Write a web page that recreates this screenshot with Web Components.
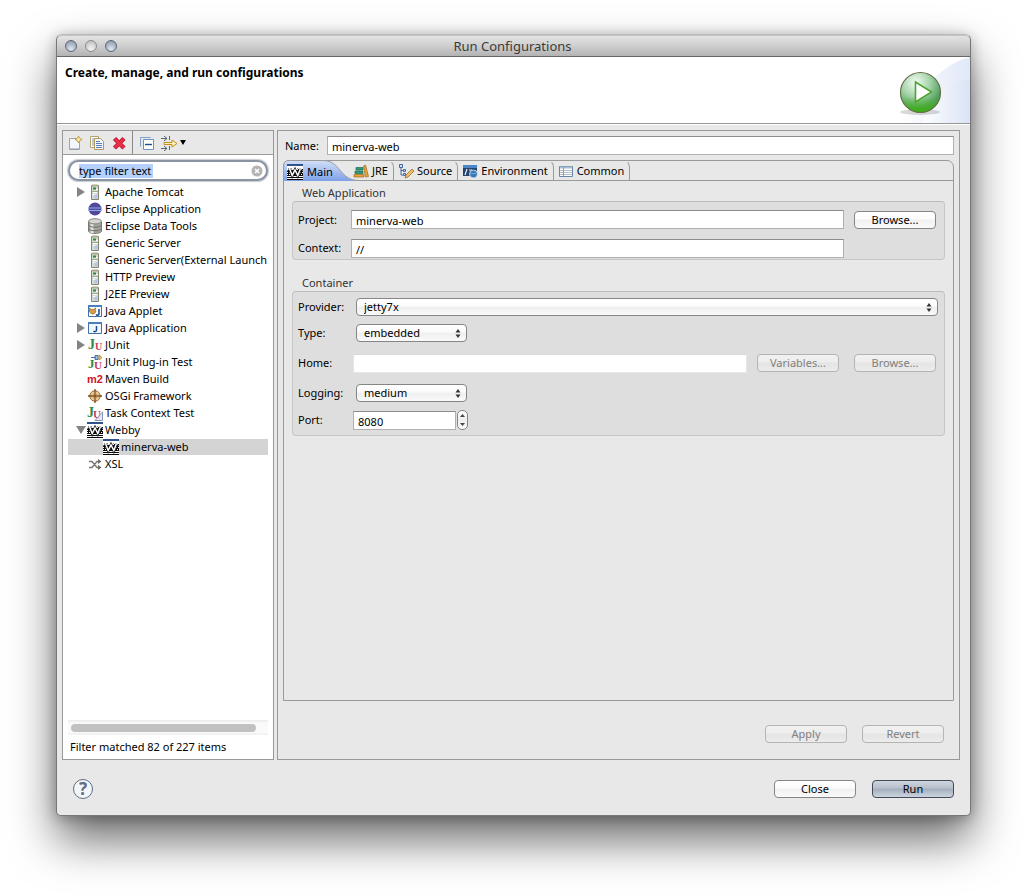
<!DOCTYPE html>
<html lang="en">
<head>
<meta charset="utf-8">
<title>Run Configurations</title>
<style>
  html, body { margin: 0; background: #fff; }
  body {
    box-sizing: border-box; min-height: 100vh; padding: 34px 56px 78px 56px;
    display: flex; font: 11px/16px "Noto Sans", "Open Sans", sans-serif; color: #000;
  }
</style>
</head>
<body>
<run-dialog></run-dialog>
<script>
const ICONS = {
  newcfg: `<path d="M2.500 3.500h7v2l3 1v8h-10z" fill="#f4f6fd" stroke="#a9a48c"/><path d="M3 14h9" stroke="#8f98b8"/><path d="M11.500 1l1.200 2.300L15 4.500l-2.300 1.200L11.500 8l-1.200-2.300L8 4.500l2.300-1.200z" fill="#fbe9a8" stroke="#b98a2c" stroke-width=".8"/>`,
  copy: `<path d="M1.500 1.500h8v11h-8z" fill="#fff" stroke="#b3a36e"/><path d="M3 4h2M3 6h2M3 8h2M3 10h2" stroke="#7e93bd"/><path d="M5.500 3.500h6l3 3v8h-9z" fill="#f4f7ff" stroke="#b09a58"/><path d="M7 6.500h4M7 8.500h6M7 10.500h6M7 12.500h6" stroke="#5a7fb8"/>`,
  del: `<path d="M3.500 3.500l9.500 9.500M13 3.500L3.500 13" stroke="#b01830" stroke-width="4.400"/><path d="M4 4l8.500 8.500M12.500 4L4 12.500" stroke="#ee2c45" stroke-width="3"/>`,
  collapse: `<path d="M1.500 11.500v-9h10" fill="none" stroke="#7fa3cc"/><path d="M4.500 4.500h10v10h-10z" fill="#fff" stroke="#6c93c2"/><path d="M6 9.500h7" stroke="#1d4f8c" stroke-width="1.400"/>`,
  filter: `<path d="M0 3.500h6M3 1l3 2.500L3 6M8.500 1v4M0 13.500h6M3 11l3 2.500L3 16M8.500 11v4" fill="none" stroke="#5d646b"/><path d="M3 7.500h8V5l5 3.500-5 3.500V9.500H3z" fill="#fff2b8" stroke="#c28e21"/>`,
  server: `<path d="M4.500 1.500h7v14h-7z" fill="#d3dcd0" stroke="#85866f"/><path d="M5 1.500h6" stroke="#a9ab8c" stroke-width="2"/><path d="M5 7.500h6" stroke="#a3a893"/><path d="M6 3.500h3v2H6z" fill="#2d8a3c"/><path d="M9 5.500h2M6 8.500h4M6 10.500h3" stroke="#fff" stroke-width="1.200"/><path d="M7.500 10.500h3v4h-3z" fill="#b3c1ee"/>`,
  eclipse: `<circle cx="8" cy="8" r="6.500" fill="#51489c"/><path d="M1 7h14M1 9.500h14" stroke="#8fb0ec" stroke-width="1.200"/>`,
  db: `<path d="M1.500 3.500v9.500c0 1.500 3 2.500 6.500 2.500s6.500-1 6.500-2.500V3.500z" fill="#a5a39d" stroke="#7c7a74"/><path d="M5 4v11" stroke="#e3e2de" stroke-width="3"/><ellipse cx="8" cy="3.300" rx="6.500" ry="2.600" fill="#d5d4cf" stroke="#85837d"/><path d="M1.500 7c1 3 12 3 13 0M1.500 10.500c1 3 12 3 13 0" fill="none" stroke="#716f69"/>`,
  applet: `<path d="M1.500 2.500h13v11h-13z" fill="#fff" stroke="#3d70ad"/><path d="M1 3h14" stroke="#4b7fbd" stroke-width="2"/><path d="M2 5c1 1 1 2 0 3 2 4 6 4 7 0-1-1-1-2 0-3-1 0-2 1-2 2-1-1-2-1-3 0 0-1-1-2-2-2z" fill="#d79a4b" stroke="#8c5a1e" stroke-width=".7"/><path d="M12 6v4.500c0 2-2 2-3 1" fill="none" stroke="#1e4f8e" stroke-width="1.600"/>`,
  japp: `<path d="M1.500 2.500h13v11h-13z" fill="#f2f7fe" stroke="#3d70ad"/><path d="M1 3h14" stroke="#4b7fbd" stroke-width="2"/><path d="M9.500 6v4c0 2-2 2-3 1" fill="none" stroke="#1e4f8e" stroke-width="1.500"/>`,
  junit: `<text x="1" y="12" font-family="Liberation Serif,serif" font-weight="bold" font-size="14" fill="#2f8a48">J</text><text x="8" y="13" font-family="Liberation Serif,serif" font-weight="bold" font-size="10" fill="#c8385c">U</text>`,
  junitp: `<text x="1" y="14" font-family="Liberation Serif,serif" font-weight="bold" font-size="13" fill="#2f8a48">J</text><text x="7" y="15" font-family="Liberation Serif,serif" font-weight="bold" font-size="11" fill="#c8385c">U</text><path d="M4 3.500h5M8 1.500h3v4H8z" fill="#9fc0e8" stroke="#4676b0"/><path d="M12 1l3 2.500L12 6z" fill="#f3d48c" stroke="#b98a2c"/>`,
  task: `<text x="0" y="12" font-family="Liberation Serif,serif" font-weight="bold" font-size="14" fill="#2f8a48">J</text><text x="6" y="13" font-family="Liberation Serif,serif" font-weight="bold" font-size="11" fill="#c8385c">U</text><path d="M15.500 7v8.500H8z" fill="#dbe0f2" fill-opacity=".8" stroke="#8e95b8"/>`,
  m2: `<text x="0" y="12" font-family="Liberation Sans,sans-serif" font-weight="bold" font-size="11" fill="#d3142a">m2</text>`,
  osgi: `<circle cx="8" cy="8" r="5.200" fill="#eccf9f" stroke="#a06a30"/><path d="M8 1v14M1 8h14" stroke="#7d4d1c" stroke-width="1.300"/><circle cx="8" cy="8" r="2.500" fill="none" stroke="#b58450" stroke-width=".8"/>`,
  webby: `<path d="M0 0h16v16H0z" fill="#0a0a0a"/><path d="M0 0h16v2H0z" fill="#2e528c"/><path d="M0 2h16v3H0z" fill="#fff"/><path d="M1 4.500h15M0 6.500h16" stroke="#7a8798" stroke-dasharray="1 2"/><path d="M0 5.500h16" stroke="#fff" stroke-dasharray="3 1"/><path d="M0 8.500h3M13 8.500h3M0 10.500h4M12 10.500h4" stroke="#fff" stroke-dasharray="1 1"/><path d="M0 12.500h16M0 14.500h16" stroke="#fff"/><path d="M2.500 5l2.700 6.500L8 6l2.800 5.500L13.500 5" fill="none" stroke="#111" stroke-width="3"/><path d="M2.500 4.500l2.700 7L8 6l2.800 5.500 2.700-7" fill="none" stroke="#fff" stroke-width="1.500"/>`,
  xsl: `<path d="M2 5.500h3l5 6h3M2 11.500h3l5-6h3" fill="none" stroke="#77776f" stroke-width="1.300"/><path d="M11 3l3.500 2.500L11 8zM11 9l3.500 2.500L11 14z" fill="#6c6c60"/>`,
  jre: `<path d="M3 4.500h7v2.500H3zM2 8h8v2.500H2z" fill="#2e9a78" stroke="#1c6b55" stroke-width=".7"/><path d="M1 11.500h10V14H1z" fill="#e9a33a" stroke="#a1661a" stroke-width=".7"/><path d="M10.500 3l2-1 3 11.500-3 .5z" fill="#e7a53d" stroke="#a1661a" stroke-width=".7"/>`,
  source: `<path d="M1.500 1.500h3v3h-3zM5.500 6.500h2v2h-2zM5.500 10.500h2v2h-2z" fill="#cfe0f6" stroke="#41699c"/><path d="M3 5v7h2M3 7.500h2" fill="none" stroke="#41699c"/><path d="M7 15l1-3 6-6 2 2-6 6z" fill="#f0bf6c" stroke="#9a6a26" stroke-width=".8"/>`,
  env: `<path d="M1 2h14v11H1z" fill="#24446f"/><path d="M1 2h14v3H1z" fill="#4b86c6"/><path d="M3 12l2-6M7 7h3" stroke="#e8f0fa" stroke-width="1.200"/><circle cx="11.500" cy="11" r="4" fill="#3878b8" stroke="#e8eef6" stroke-width=".8"/><path d="M8 10c2 1 5 1 7-1" stroke="#7db0dc" fill="none"/>`,
  common: `<path d="M1.500 3.500h13v10h-13z" fill="#fff" stroke="#6886a8"/><path d="M2 4.500h12" stroke="#a8bdd6" stroke-width="2"/><path d="M2 7.500h12M2 9.500h12M2 11.500h12" stroke="#b4bccb"/><path d="M5.500 4v9" stroke="#8ba0bb"/>`
};

function define(name, html, setup) {
  const t = document.createElement('template');
  t.innerHTML = html;
  customElements.define(name, class extends HTMLElement {
    constructor() {
      super();
      this.attachShadow({ mode: 'open' }).appendChild(t.content.cloneNode(true));
    }
    connectedCallback() { if (setup) setup(this, s => this.shadowRoot.querySelector(s)); }
  });
}

define('ui-icon', `<style>:host{display:block;flex:none;width:16px;height:16px}svg{display:block}</style><svg width="16" height="16" viewBox="0 0 16 16" aria-hidden="true"></svg>`,
  (el, $) => { $('svg').innerHTML = ICONS[el.getAttribute('name')] || ''; });

define('tool-button', `<style>
  :host{display:block;flex:none}
  button{display:flex;align-items:center;gap:3px;border:0;padding:0;background:none}
  i{display:none;border:3px solid transparent;border-top:5px solid #000;border-bottom:0}
  :host([menu]) i{display:block}
</style><button><slot></slot><i></i></button>`, (el, $) => $('button').setAttribute('aria-label', el.getAttribute('hint')));

define('push-button', `<style>
  :host{display:block;flex:none;width:82px}
  button{display:block;box-sizing:border-box;width:100%;height:18px;padding:0;font:inherit;line-height:16px;color:#000;
    border:1px solid #868686;border-radius:4px;background:linear-gradient(#fff,#fbfbfb 45%,#f0f0f0 50%,#fafafa)}
  button:disabled{color:#808080;border-color:#b4b4b4;background:linear-gradient(#f1f1f1,#ededed 45%,#e4e4e4 50%,#ececec)}
  :host([primary]) button{border-color:#45495c;background:linear-gradient(#ced5de,#b6bfcb 45%,#a3aebd 50%,#cbd5e0)}
</style><button><slot></slot></button>`, (el, $) => { $('button').disabled = el.hasAttribute('disabled'); });

define('text-row', `<style>
  :host{display:flex;align-items:center}
  label{flex:none;width:var(--label,53px)}
  input{box-sizing:border-box;flex:1;min-width:0;height:19px;margin:0;padding:2px 4px 0;font:inherit;color:#000;
    border:1px solid #b0b0b0;border-top-color:#8c8c8c;border-radius:0;background:#fff;outline:0}
  input:disabled{border-color:#d8d8d8 #e6e6e6 #e6e6e6}
  :host([short]) input{flex:none;width:103px}
  slot{display:flex;align-items:center;gap:15px}
</style><label for="f"></label><input id="f" type="text"><slot></slot>`, (el, $) => {
  $('label').textContent = el.getAttribute('label');
  $('input').value = el.getAttribute('value') || '';
  $('input').disabled = el.hasAttribute('disabled');
});

define('select-row', `<style>
  :host{display:flex;align-items:center}
  :host([wide]){margin-right:-2px}
  label{flex:none;width:58px}
  div{position:relative;flex:none;width:111px}
  :host([wide]) div{flex:1}
  select{display:block;appearance:none;box-sizing:border-box;width:100%;height:18px;margin:0;padding:0 7px;font:inherit;line-height:16px;color:#000;
    border:1px solid #868686;border-radius:4px;background:linear-gradient(#fff,#fbfbfb 45%,#efefef 50%,#fafafa)}
  svg{position:absolute;right:6px;top:5px;pointer-events:none}
</style><label for="s"></label><div><select id="s"><option></option></select><svg width="6" height="9" viewBox="0 0 6 9"><path d="M3 0l2.500 3.500h-5zM3 9l2.500-3.500h-5z" fill="#333"/></svg></div>`, (el, $) => {
  $('label').textContent = el.getAttribute('label');
  $('option').textContent = el.getAttribute('value');
});

define('num-stepper', `<style>
  :host{display:block;margin-left:1px}
  div{box-sizing:border-box;width:11px;height:20px;border:1px solid #868686;border-radius:5px;background:linear-gradient(#fff,#eee 50%,#fafafa);overflow:hidden}
  button{display:flex;align-items:center;justify-content:center;width:9px;height:9px;padding:0;border:0;background:none}
</style><div><button aria-label="Increase"><svg width="5" height="3"><path d="M2.500 0L5 3H0z" fill="#444"/></svg></button><button aria-label="Decrease"><svg width="5" height="3"><path d="M2.500 3L5 0H0z" fill="#444"/></svg></button></div>`);

define('group-box', `<style>
  :host{display:block}
  h3{margin:0;padding-left:10px;font:inherit;line-height:16px;color:#333}
  div{box-sizing:border-box;border:1px solid #c6c6c6;border-top-color:#bcbcbc;border-radius:4px;background:#dedede;padding:0 8px 0 5px;
    display:grid;grid-template-rows:var(--rows)}
</style><h3></h3><div><slot></slot></div>`, (el, $) => { $('h3').textContent = el.getAttribute('heading'); });

define('tree-row', `<style>
  :host{display:flex;align-items:center;height:16px;margin-bottom:1px;padding-left:8px;white-space:nowrap}
  :host([level="2"]){padding-left:24px}
  :host([selected]){background:#d4d4d4}
  i{flex:none;box-sizing:border-box;width:11px;height:10px;border:0 solid transparent}
  :host([state="closed"]) i{width:8px;margin:0 2px 0 1px;border-width:5px 0 5px 8px;border-left-color:#848484}
  :host([state="open"]) i{width:10px;height:8px;margin-right:1px;border-width:8px 5px 0 5px;border-top-color:#848484}
  span{padding-left:2px}
</style><i></i><ui-icon></ui-icon><span><slot></slot></span>`, (el, $) => {
  const s = $('ui-icon');
  s.setAttribute('name', el.getAttribute('icon'));
  s.shadowRoot.querySelector('svg').innerHTML = ICONS[el.getAttribute('icon')];
  el.setAttribute('role', 'treeitem');
});

define('tab-item', `<style>
  :host{display:block;position:relative;flex:none}
  button{position:relative;box-sizing:border-box;display:flex;align-items:center;gap:3px;height:20px;padding:0 5px 0 4px;font:inherit;color:#000;
    background:none;border:0;border-right:1px solid #9a9a9a;border-top:1px solid transparent;border-radius:0 7px 0 0}
  :host([selected]) button{width:65px;padding:0 0 0 3px;gap:4px;border-color:transparent}
  svg{display:none;position:absolute;left:-1px;top:-1px}
  :host([selected]) svg{display:block}
</style>
<svg width="80" height="21" viewBox="0 0 80 21"><defs><linearGradient id="g" x2="0" y2="1"><stop offset="0" stop-color="#d3e0f8"/><stop offset="1" stop-color="#7ea0e8"/></linearGradient></defs><path d="M.5 21V6Q.5.500 6 .500H40C58 .500 56 20.500 76 20.500V21z" fill="url(#g)"/><path d="M.5 21V6Q.5.500 6 .500H40C58 .500 56 20.500 76 20.500" fill="none" stroke="#9a9a9a"/></svg>
<button role="tab"><slot></slot></button>`, (el, $) => $('button').setAttribute('aria-selected', el.hasAttribute('selected')));

define('filter-field', `<style>
  :host{display:flex;align-items:center;height:17px;padding:0 3px 0 9px;border:2px solid #8a94a2;border-radius:11px;background:#fff;box-shadow:0 0 1px 1px #c6cbd2}
  input{box-sizing:border-box;flex:1;min-width:0;height:17px;margin:0;padding:0;border:0;outline:0;font:inherit;color:#000;
    background:linear-gradient(#b4d1fd,#b4d1fd) 0 2px/74px 14px no-repeat}
  button{display:block;padding:0;border:0;background:none}
  svg{display:block}
</style><input type="text" aria-label="Filter" value="type filter text"><button aria-label="Clear"><svg width="12" height="12" viewBox="0 0 12 12"><circle cx="6" cy="6" r="5.500" fill="#b4b4b4"/><path d="M4 4l4 4M8 4l-4 4" stroke="#fff" stroke-width="1.500"/></svg></button>`);

define('config-list', `<style>
  :host{display:flex;flex-direction:column;box-sizing:border-box;width:212px;flex:none;border:1px solid #999;background:#fff}
  nav{display:flex;align-items:center;height:23px;padding-left:4px;gap:6px;background:#e8e8e8;border-bottom:1px solid #999}
  hr{align-self:stretch;width:1px;margin:0 0 0 -1px;border:0;background:#8a8a8a}
  filter-field{margin:5px 5px 3px}
  main{flex:1;min-height:0;margin:0 5px;overflow:hidden}
  .bar{height:15px;margin:0 5px;background:linear-gradient(#eaeaea,#fafafa 20%,#fafafa 80%,#f0f0f0);padding:4px 12px 0 3px;box-sizing:border-box}
  .bar b{display:block;height:8px;border-radius:4px;background:#c1c1c1}
  footer{padding:4px 7px}
</style>
<nav><tool-button hint="New"><ui-icon name="newcfg"></ui-icon></tool-button><tool-button hint="Duplicate"><ui-icon name="copy"></ui-icon></tool-button><tool-button hint="Delete"><ui-icon name="del"></ui-icon></tool-button><hr><tool-button hint="Collapse all"><ui-icon name="collapse"></ui-icon></tool-button><tool-button menu hint="Filter"><ui-icon name="filter"></ui-icon></tool-button></nav>
<filter-field></filter-field>
<main role="tree">
<tree-row icon="server" state="closed">Apache Tomcat</tree-row>
<tree-row icon="eclipse">Eclipse Application</tree-row>
<tree-row icon="db">Eclipse Data Tools</tree-row>
<tree-row icon="server">Generic Server</tree-row>
<tree-row icon="server">Generic Server(External Launch</tree-row>
<tree-row icon="server">HTTP Preview</tree-row>
<tree-row icon="server">J2EE Preview</tree-row>
<tree-row icon="applet">Java Applet</tree-row>
<tree-row icon="japp" state="closed">Java Application</tree-row>
<tree-row icon="junit" state="closed">JUnit</tree-row>
<tree-row icon="junitp">JUnit Plug-in Test</tree-row>
<tree-row icon="m2">Maven Build</tree-row>
<tree-row icon="osgi">OSGi Framework</tree-row>
<tree-row icon="task">Task Context Test</tree-row>
<tree-row icon="webby" state="open">Webby</tree-row>
<tree-row icon="webby" level="2" selected>minerva-web</tree-row>
<tree-row icon="xsl">XSL</tree-row>
</main>
<div class="bar"><b></b></div>
<footer>Filter matched 82 of 227 items</footer>`);

define('config-editor', `<style>
  :host{display:flex;flex-direction:column;box-sizing:border-box;flex:1;min-width:0;border:1px solid #999;padding:5px 5px 16px}
  .name{--label:42px;margin:0 0 5px 2px}
  .folder{flex:1;display:flex;flex-direction:column;border:1px solid #9a9a9a;border-radius:7px 7px 0 0}
  .tabs{display:flex;height:19px;border-bottom:1px solid #9a9a9a}
  .tabs tab-item{margin-top:-1px}
  .tabs tab-item[selected]{margin-top:0}
  section{padding:4px 8px}
  group-box + group-box{margin-top:15px}
  .buttons{display:flex;justify-content:flex-end;gap:15px;padding:24px 10px 0}
</style>
<text-row class="name" label="Name:" value="minerva-web"></text-row>
<div class="folder">
 <div class="tabs" role="tablist">
  <tab-item selected><ui-icon name="webby"></ui-icon>Main</tab-item>
  <tab-item><ui-icon name="jre"></ui-icon>JRE</tab-item>
  <tab-item><ui-icon name="source"></ui-icon>Source</tab-item>
  <tab-item><ui-icon name="env"></ui-icon>Environment</tab-item>
  <tab-item><ui-icon name="common"></ui-icon>Common</tab-item>
 </div>
 <section>
  <group-box heading="Web Application" style="--rows:35px 22px">
   <text-row label="Project:" value="minerva-web"><push-button style="margin-left:10px">Browse...</push-button></text-row>
   <text-row label="Context:" value="//" style="padding-right:92px"></text-row>
  </group-box>
  <group-box heading="Container" style="--rows:29px 24px 36px 24px 30px">
   <select-row wide label="Provider:" value="jetty7x"></select-row>
   <select-row label="Type:" value="embedded"></select-row>
   <text-row disabled label="Home:" style="--label:55px"><push-button disabled style="margin-left:10px">Variables...</push-button><push-button disabled>Browse...</push-button></text-row>
   <select-row label="Logging:" value="medium"></select-row>
   <text-row short label="Port:" value="8080" style="--label:55px"><num-stepper></num-stepper></text-row>
  </group-box>
 </section>
</div>
<div class="buttons"><push-button disabled>Apply</push-button><push-button disabled>Revert</push-button></div>`);

define('title-bar', `<style>
  :host{display:flex;align-items:center;box-sizing:border-box;height:22px;padding-left:8px;border-bottom:1px solid #666;border-radius:5px 5px 0 0;
    background:linear-gradient(#e6e6e6,#cfcfcf 50%,#b3b3b3);box-shadow:inset 0 1px #c4c4c4}
  .lights{display:flex;gap:8px;width:60px}
  .lights button{box-sizing:border-box;width:12px;height:12px;padding:0;border:1px solid #5f6670;border-radius:6px;background:radial-gradient(circle at 50% 80%,#dfe7f2,#98a5b8 75%)}
  .lights .off{border-color:#8c8c8c;background:radial-gradient(circle at 50% 80%,#f4f4f4,#c4c4c4 80%)}
  h1{flex:1;margin:0 70px 0 0;text-align:center;font-size:13px;font-weight:400;line-height:20px;color:#3c3c3c}
</style><div class="lights"><button aria-label="Close window"></button><button class="off" aria-label="Minimise"></button><button aria-label="Zoom"></button></div><h1><slot></slot></h1>`);

define('dialog-header', `<style>
  :host{display:flex;justify-content:space-between;height:66px;background:#fff;border-bottom:1px solid #969696;overflow:hidden}
  h2{margin:0;padding:8px;font-size:12px;line-height:16px;font-weight:700}
  svg{display:block;flex:none}
</style><h2><slot></slot></h2>
<svg width="110" height="67" viewBox="0 0 110 67" aria-hidden="true"><defs>
<radialGradient id="b" cx=".38" cy=".25" r=".8"><stop offset="0" stop-color="#f4fbf4"/><stop offset=".45" stop-color="#a3d3a8"/><stop offset=".85" stop-color="#4d9c5c"/><stop offset="1" stop-color="#3ba52c"/></radialGradient>
<linearGradient id="s" x2="1"><stop offset="0" stop-color="#fff"/><stop offset="1" stop-color="#d9e2f6"/></linearGradient>
<linearGradient id="l" x2="0" y2="1"><stop offset=".6" stop-color="#49b31f" stop-opacity="0"/><stop offset="1" stop-color="#3cb010"/></linearGradient></defs>
<path d="M110 0C80 8 62 32 40 67H110z" fill="url(#s)" opacity=".8"/><path d="M110 22C88 26 70 40 62 67H110z" fill="url(#s)" opacity=".8"/>
<ellipse cx="60" cy="55" rx="20" ry="3" fill="#000" opacity=".15"/>
<circle cx="60.500" cy="35.500" r="20" fill="url(#b)"/><circle cx="60.500" cy="35.500" r="20" fill="url(#l)" stroke="#66704a" stroke-width="1.200"/>
<path d="M55.500 25v20l16-10z" fill="#fff" stroke="#4da52f" stroke-width="1.600"/></svg>`);

define('dialog-footer', `<style>
  :host{display:flex;align-items:center;gap:16px;height:55px;padding:3px 16px 0;box-sizing:border-box}
  .help{box-sizing:border-box;width:20px;height:20px;margin-right:auto;padding:0;border:1px solid #5f6d86;border-radius:10px;background:#f4f5f8;color:#5f6d86;font:bold 17px/18px "Noto Sans",sans-serif}
</style><button class="help">?</button><push-button>Close</push-button><push-button primary>Run</push-button>`);

define('run-dialog', `<style>
  :host{flex:1;min-width:0;display:flex;flex-direction:column;border:1px solid #777;border-top-color:#bbb;border-radius:6px 6px 5px 5px;background:#e8e8e8;
    box-shadow:0 24px 46px rgba(0,0,0,.58),0 2px 14px rgba(0,0,0,.28)}
  .body{flex:1;display:flex;gap:3px;padding:5px 10px 0 5px;border-top:1px solid #fff}
</style>
<title-bar>Run Configurations</title-bar>
<dialog-header>Create, manage, and run configurations</dialog-header>
<div class="body"><config-list></config-list><config-editor></config-editor></div>
<dialog-footer></dialog-footer>`);
</script>
</body>
</html>
